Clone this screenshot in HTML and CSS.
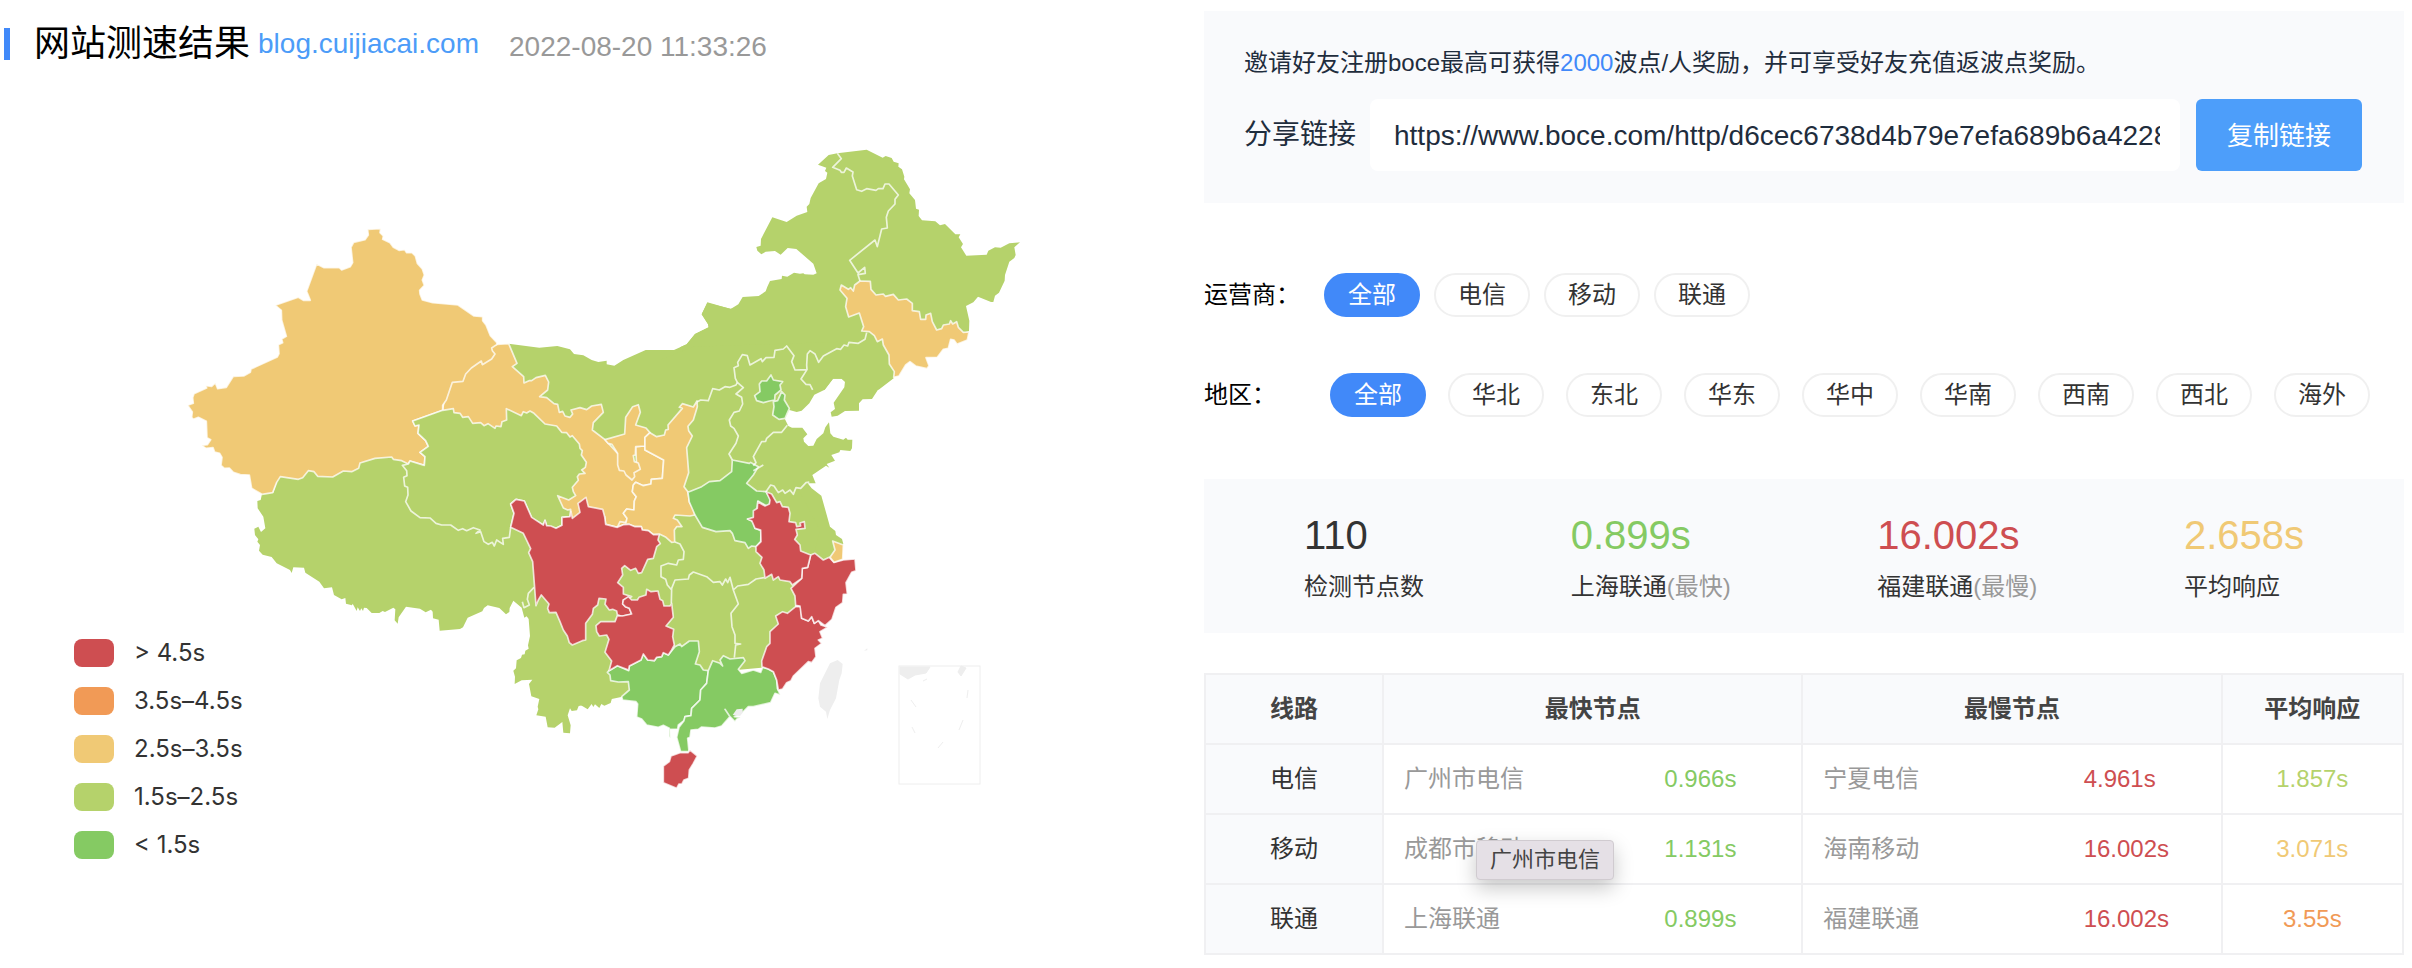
FILE: index.html
```html
<!DOCTYPE html>
<html lang="zh-CN">
<head>
<meta charset="utf-8">
<title>网站测速结果</title>
<link rel="stylesheet" href="styles.css">
</head>
<body>
<main class="page">
  <section class="result">
    <header class="result-head">
      <h1 class="title">网站测速结果</h1>
      <a class="site" href="#">blog.cuijiacai.com</a>
      <time class="date">2022-08-20 11:33:26</time>
    </header>
    <div class="map-area">
      <svg class="map" viewBox="0 88 1206 800" role="img" aria-label="全国响应时间分布">
        <!-- land base -->
        <g class="land c-lime">
          <path transform="translate(240 450) scale(.33333)" d="M66 132L62 150L52 153L53 175L70 200L76 235L63 246L55 230L43 236L45 255L55 268L52 275L60 285L57 302L68 314L95 321L110 340L150 360L155 369L160 352L192 353L196 368L238 395L252 415L276 412L282 435L305 448L316 444L318 461L336 466L338 461L350 483L353 472L360 483L364 475L369 483L372 473L380 474L395 489L418 489L428 483L435 486L460 473L466 478L464 511L473 521L476 502L498 470L540 476L557 487L573 479L578 485L579 505L596 509L599 542L660 537L669 532L683 503L727 484L732 474L743 466L778 474L798 493L808 486L809 474L820 452L845 473L853 503L860 499L866 507L870 558L864 586L866 596L856 602L854 613L846 614L843 624L830 631L828 655L820 662L825 680L824 702L845 691L877 689L867 702L874 739L898 747L893 770L895 778L889 796L917 800L923 832L944 833L967 816L970 848L990 850L992 826L983 796L990 775L995 783L1011 781L1018 763L1043 778L1055 762L1060 771L1065 763L1078 774L1084 762L1093 767L1112 759L1116 745L1140 730L1147 740L1300 600L1400 200L1100 -100L555 -20L300 -20L120 70L100 128Z"/>
          <path transform="translate(480 300) scale(.33333)" d="M86 131L178 143L232 138L270 148L282 162L310 166L335 180L355 186L380 182L380 193L403 197L430 180L497 150L582 150L620 133L645 102L686 82L684 72L665 43L682 9L752 26L1020 0L900 330L900 700L100 700Z"/>
          <path transform="translate(680 130) scale(.33333)" d="M0 652L20 643L45 612L86 592L84 583L65 553L82 517L152 537L175 523L188 501L236 498L257 484L262 470L270 453L305 447L306 437L322 440L342 428L360 431L370 430L374 433L400 434L410 430L400 401L349 357L323 354L302 374L285 363L257 365L244 373L232 362L229 351L242 347L243 327L277 262L320 276L350 257L382 246L380 230L388 222L392 204L416 160L438 147L442 128L435 123L439 113L414 104L446 75L472 70L560 59L608 83L617 78L635 84L641 95L656 100L655 110L666 118L673 140L672 148L690 178L688 190L705 210L708 236L717 239L716 258L726 271L766 274L780 286L795 282L826 313L841 313L836 322L849 342L843 352L859 377L920 374L925 362L945 352L962 353L988 340L1020 337L1003 352L1007 375L1003 384L988 395L975 435L974 452L957 488L945 497L940 516L933 516L894 500L880 517L858 528L868 572L867 604L700 640L641 745L596 779L495 770L495 755L485 746L459 746L434 779L0 780Z"/>
          <path transform="translate(660 340) scale(.33333)" d="M703 110L655 148L636 177L608 178L597 190L597 212L555 213L533 227L515 230L512 217L525 207L521 188L553 142L555 125L545 116L519 116L494 149L463 164L448 190L425 212L410 216L388 210L375 238L385 258L396 263L427 263L442 283L430 295L432 305L445 318L460 317L470 297L490 280L496 262L507 247L511 280L520 290L550 299L558 293L563 299L577 299L576 325L571 333L541 330L538 337L514 345L525 362L500 372L508 383L498 377L457 405L467 430L443 430L455 445L484 467L510 560L526 573L528 585L546 597L550 612L520 660L500 720L0 720L0 60L100 20L700 0Z"/>
          <path transform="translate(560 480) scale(.33333)" d="M0 0L700 0L780 150L760 230L640 560L200 600L187 650L0 690Z"/>
        </g>
        <!-- west -->
        <g class="province" transform="translate(480 300) scale(.33333)">
          <path class="c-yellow" d="M51 133L86 131L111 190L97 200L131 230L132 249L147 242L155 242L168 233L196 226L206 246L203 270L179 290L200 293L222 311L233 313L238 337L248 334L255 348L270 352L278 342L273 330L300 323L320 329L335 318L364 313L370 337L340 368L337 390L375 419L413 460L470 500L467 440L495 438L495 450L551 480L547 535L514 538L513 552L490 557L467 547L460 555L457 575L469 590L463 603L462 630L440 627L430 640L441 655L438 668L412 682L377 673L374 650L300 640L290 690L200 600L-100 500L-112 331L-100 240L-20 150Z"/>
        </g>
        <g class="province" transform="translate(180 210) scale(.33333)">
          <path class="c-yellow" d="M563 58L602 56L600 68L610 78L608 88L630 98L640 112L657 121L674 119L680 128L696 128L706 138L712 160L727 177L733 195L727 210L733 226L719 241L720 252L727 270L758 278L834 285L882 318L908 320L908 332L918 345L931 377L950 397L951 403L935 414L937 422L945 432L935 447L907 464L904 453L874 474L857 492L849 514L817 517L799 570L788 586L788 601L698 633L705 648L717 645L714 670L737 692L745 709L720 727L735 740L733 766L690 753L685 762L665 752L640 748L635 741L585 745L540 759L536 775L515 785L490 783L458 801L413 799L402 785L385 782L368 803L355 808L301 800L290 817L278 848L246 853L215 835L208 795L181 794L160 787L148 774L133 775L123 766L126 742L119 730L104 726L99 713L78 715L65 706L82 704L92 689L81 683L79 634L55 622L40 628L35 622L37 606L23 586L40 580L38 563L42 551L80 534L77 527L95 529L106 519L113 536L139 532L160 499L191 498L211 487L213 477L292 441L297 431L295 404L308 398L305 387L319 379L305 330L304 301L286 286L355 262L370 271L391 271L380 244L410 162L432 173L478 173L485 180L511 170L518 158L513 112L521 97L555 89L565 75Z"/>
          <path class="c-lime" d="M788 601L820 596L822 608L840 610L848 622L865 620L878 640L902 638L912 647L924 641L945 655L948 648L963 650L966 635L980 630L979 596L1024 617L1030 605L1040 609L1050 603L1062 610L1095 642L1130 648L1145 667L1160 668L1170 681L1177 677L1198 702L1200 715L1207 722L1204 735L1219 757L1216 772L1205 780L1215 790L1198 792L1192 800L1195 811L1177 832L1180 845L1187 857L1166 870L1133 857L1150 894L1163 900L1172 898L1170 920L1146 922L1146 946L1128 955L1100 948L1095 932L1090 945L1055 925L1033 873L1008 868L992 882L1002 910L992 952L988 982L968 985L970 1003L950 990L943 1008L937 997L925 1003L912 995L902 965L888 970L900 960L880 953L860 962L848 956L835 961L812 945L785 945L768 940L750 924L720 923L693 903L677 875L684 855L683 832L674 828L671 802L681 797L680 782L667 766L685 762L690 753L733 766L735 740L720 727L745 709L737 692L714 670L717 645L705 648L698 633Z"/>
        </g>
        <!-- centre and north -->
        <g class="province" transform="translate(480 300) scale(.33333)">
          <path class="c-yellow" d="M375 419L434 402L437 352L458 320L475 314L481 337L467 375L498 384L510 398L495 412L495 438L467 440L466 465L460 467L463 485L475 489L481 508L462 518L464 530L456 540L438 525L432 513L418 511L413 495L413 460L396 433L384 430Z"/>
          <path class="c-yellow" d="M510 398L530 410L553 405L557 390L565 388L564 375L607 325L598 322L607 311L640 321L651 303L652 320L640 360L624 379L626 392L637 408L620 443L626 518L612 560L624 576L628 606L643 630L644 645L630 648L585 645L580 655L592 660L606 680L590 680L583 690L584 726L575 727L558 712L540 703L520 704L505 692L487 690L484 680L465 680L447 673L430 674L412 682L420 665L438 668L441 655L430 640L440 627L462 630L463 603L469 590L457 575L460 555L467 547L490 557L513 552L514 538L547 535L551 480L495 450L495 412Z"/>
          <path class="c-red" d="M92 682L102 640L92 612L108 598L133 603L155 652L190 675L195 660L200 677L213 678L228 685L246 676L246 652L270 650L273 634L277 655L300 637L294 610L318 592L325 620L368 628L374 650L377 673L412 682L430 674L447 673L465 680L484 680L487 690L505 692L520 704L538 703L534 720L541 731L530 740L520 775L503 778L485 818L475 820L467 805L452 811L434 797L425 805L428 825L413 848L430 862L430 882L455 890L430 900L428 912L436 920L448 925L455 942L425 949L412 944L410 933L398 928L388 930L375 913L378 897L357 895L353 915L340 925L337 943L317 970L317 1020L307 1022L277 1035L268 1028L262 1008L250 990L240 965L228 937L208 938L203 925L207 912L184 885L175 900L168 917L158 785L146 758L152 746L130 700Z"/>
          <path class="c-green" d="M757 480L808 490L812 487L820 492L835 500L820 525L800 550L830 573L858 575L872 598L868 615L860 618L834 603L830 632L820 655L803 657L820 665L825 685L843 692L842 725L828 740L815 738L805 745L795 728L765 722L757 700L750 692L708 695L667 682L645 645L628 606L624 577L665 560L688 545L720 542L755 515Z"/>
          <path class="c-green" d="M873 225L880 240L908 245L900 255L903 270L885 285L884 300L868 303L850 308L830 302L824 287L840 275L838 252L845 243L860 243Z"/>
          <path class="c-green" d="M905 275L915 285L913 300L928 325L915 355L897 358L878 345L882 320L880 305L893 302Z"/>
        </g>
        <g class="province" transform="translate(680 130) scale(.33333)">
          <path class="c-yellow" d="M540 453L571 454L573 478L588 495L610 492L616 499L640 493L655 510L680 507L697 520L697 542L718 545L722 568L737 568L738 555L752 550L757 575L770 600L785 596L790 585L808 582L812 572L818 582L830 575L835 592L850 607L867 606L862 630L832 642L840 655L822 630L812 628L805 655L790 658L772 682L738 683L747 707L741 716L707 708L690 695L677 705L657 738L641 742L643 725L628 702L627 675L610 645L607 627L592 635L583 617L568 605L545 603L551 590L538 549L506 561L497 530L501 505L480 480L484 465L505 478L512 473L520 483L524 465Z"/>
        </g>
        <!-- south and east -->
        <g class="province" transform="translate(560 480) scale(.33333)">
          <path class="c-green" d="M147 572L172 557L206 572L208 558L243 540L250 522L263 540L283 542L290 532L305 530L310 518L325 525L345 500L360 492L365 500L388 483L415 483L418 515L406 552L420 555L430 570L445 572L440 610L422 630L420 660L395 685L393 707L375 710L372 722L355 735L353 747L330 748L331 775L327 768L328 745L310 736L295 742L260 735L245 717L230 711L233 672L228 665L188 660L185 650L208 630L205 605L175 606L152 602L150 585L142 577Z"/>
          <path class="c-green" d="M445 572L458 542L480 550L488 558L480 540L490 527L510 537L550 533L555 542L535 568L545 580L580 570L602 577L608 562L625 567L640 575L650 600L652 625L661 645L645 640L632 668L580 680L565 680L545 700L523 710L542 712L530 718L525 725L510 710L495 688L510 710L485 738L465 744L425 741L415 748L393 750L390 772L383 775L387 815L362 815L350 772L357 742L372 722L375 710L393 707L395 685L420 660L422 630L440 610Z"/>
          <path class="c-red" d="M232 360L237 352L258 345L260 328L273 335L294 333L300 358L308 362L312 378L330 378L335 370L340 412L318 438L341 448L338 470L343 495L335 510L325 525L310 518L305 530L290 532L283 542L263 540L250 522L243 540L208 558L206 570L172 557L147 572L155 543L135 517L147 478L140 465L118 468L110 455L108 437L122 425L165 425L172 407L187 408L215 402L208 385L196 380L188 372L190 360L205 350L215 360Z"/>
          <path class="c-red" d="M390 810L412 828L400 850L388 870L386 895L372 900L366 912L357 912L350 925L310 908L310 858L328 845L333 828L360 818L384 818Z"/>
          <path class="c-red" d="M606 560L605 543L620 500L630 490L630 455L655 432L647 408L668 395L682 400L707 380L722 380L725 415L745 423L755 410L763 430L775 422L783 435L803 442L780 455L788 475L775 480L785 490L765 505L768 530L755 548L745 545L700 588L693 602L680 608L668 627L655 630L650 600L640 575L625 567Z"/>
          <path class="c-red" d="M752 225L765 220L790 240L808 232L822 247L850 240L885 237L888 272L875 277L858 308L862 342L850 343L848 368L828 382L816 418L795 437L775 422L763 430L755 410L745 423L725 415L720 378L707 376L705 348L693 325L725 295L727 265L743 262Z"/>
          <path class="c-red" d="M618 35L635 42L650 68L660 65L667 80L685 82L690 100L687 125L707 128L710 140L722 138L720 129L733 125L735 145L708 148L712 165L704 178L720 195L722 213L752 225L743 262L727 265L725 295L697 315L690 305L660 300L655 290L640 300L635 283L615 295L612 270L600 250L606 232L588 215L588 200L603 185L602 150L585 145L575 122L562 117L580 112L580 92L592 85L593 65L615 78L628 72L630 60Z"/>
          <path class="c-yellow" d="M818 183L850 195L848 238L822 247L810 232L825 210Z"/>
          <path class="c-grey" d="M518 705L530 688L548 686L548 698L540 708ZM833 540L848 552L845 580L838 600L828 655L810 690L802 717L798 695L780 680L775 655L780 610L810 550ZM912 512L922 505L922 511Z"/>
        </g>
        <!-- borders between neighbours in the same band -->
        <g class="border">
          <path transform="translate(680 130) scale(.33333)" d="M472 70L484 86L458 112L480 121L484 127L492 127L499 114L519 126L517 138L530 179L545 184L560 176L588 181L595 176L609 176L615 162L627 162L655 195L645 208L645 222L625 243L619 262L622 294L605 297L592 350L585 330L509 391L534 429L554 412L556 430L534 434L540 453M560 608L555 628L535 640L507 637L503 648L492 645L482 658L470 656L430 678L416 697L405 672L390 662L382 672L380 705L381 719L363 747L378 763L390 764L398 780M381 719L345 720L335 695L342 677L320 648L310 657L285 661L282 682L258 683L247 695L243 686L210 705L202 677L187 674L173 697L175 707L162 713L166 745L172 757"/>
          <path transform="translate(480 300) scale(.33333)" d="M772 247L768 255L750 262L735 260L718 270L698 266L685 302L662 300L651 306M772 247L790 263L768 282L785 292L788 312L778 333L762 337L748 360L752 378L762 385L775 408L768 430L747 462L757 480M922 376L905 397L880 397L860 415L857 424L845 425L820 470L828 488L820 497M820 512L850 495M858 575L872 555L882 558L895 578L908 570L915 580L930 570L940 583L948 563L962 565L978 548L988 546"/>
          <path transform="translate(560 480) scale(.33333)" d="M345 186L360 192L372 215L370 238L355 240L350 255L325 250L303 258L303 290L317 298L322 315L335 330M334 370L335 325L345 300L385 297L388 285L400 276L440 290L460 307L480 305L487 315L497 297L503 308L510 292L520 330L533 318L565 313L588 297L612 293M520 330L535 372L513 400L516 440L525 465L525 490L542 492L527 495L523 533"/>
          <path transform="translate(240 450) scale(.33333)" d="M882 412L865 430L862 448L868 465L852 473L847 455"/>
        </g>
        <g class="inset">
          <rect x="899" y="666" width="81" height="118"/>
          <path d="M900 667H930L926 673L915 675L908 679L900 674Z"/>
          <path d="M961 666L966 668L961 676L958 672ZM911 700L916 707M912 727L915 733M938 748L943 742M959 730L963 720M967 698L968 690M923 681L927 679"/>
        </g>
      </svg>
      <ul class="legend">
        <li><i class="swatch b-red"></i>&gt; 4.5s</li>
        <li><i class="swatch b-orange"></i>3.5s–4.5s</li>
        <li><i class="swatch b-yellow"></i>2.5s–3.5s</li>
        <li><i class="swatch b-lime"></i>1.5s–2.5s</li>
        <li><i class="swatch b-green"></i>&lt; 1.5s</li>
      </ul>
    </div>
  </section>

  <section class="side">
    <div class="share">
      <p class="invite">邀请好友注册boce最高可获得<span class="points">2000</span>波点/人奖励，并可享受好友充值返波点奖励。</p>
      <div class="share-row">
        <label for="link">分享链接</label>
        <input id="link" class="link" type="text" readonly value="https://www.boce.com/http/d6cec6738d4b79e7efa689b6a4228">
        <button class="copy" type="button">复制链接</button>
      </div>
    </div>

    <div class="filter isp">
      <span class="filter-name">运营商：</span>
      <button class="pill active" type="button">全部</button>
      <button class="pill" type="button">电信</button>
      <button class="pill" type="button">移动</button>
      <button class="pill" type="button">联通</button>
    </div>
    <div class="filter area">
      <span class="filter-name">地区：</span>
      <button class="pill active" type="button">全部</button>
      <button class="pill" type="button">华北</button>
      <button class="pill" type="button">东北</button>
      <button class="pill" type="button">华东</button>
      <button class="pill" type="button">华中</button>
      <button class="pill" type="button">华南</button>
      <button class="pill" type="button">西南</button>
      <button class="pill" type="button">西北</button>
      <button class="pill" type="button">海外</button>
    </div>

    <div class="stats">
      <div><strong>110</strong><span>检测节点数</span></div>
      <div><strong class="t-green">0.899s</strong><span>上海联通<em>(最快)</em></span></div>
      <div><strong class="t-red">16.002s</strong><span>福建联通<em>(最慢)</em></span></div>
      <div><strong class="t-yellow">2.658s</strong><span>平均响应</span></div>
    </div>

    <table class="lines">
      <colgroup><col class="w-line"><col class="w-node"><col class="w-node"><col class="w-avg"></colgroup>
      <thead>
        <tr><th>线路</th><th>最快节点</th><th>最慢节点</th><th>平均响应</th></tr>
      </thead>
      <tbody>
        <tr>
          <th class="row-name">电信</th>
          <td><div class="node"><span>广州市电信</span><b class="t-green">0.966s</b></div></td>
          <td><div class="node"><span>宁夏电信</span><b class="t-red">4.961s</b></div></td>
          <td class="avg t-lime">1.857s</td>
        </tr>
        <tr>
          <th class="row-name">移动</th>
          <td><div class="node"><span>成都市移动</span><b class="t-green">1.131s</b><div class="tip" role="tooltip">广州市电信</div></div></td>
          <td><div class="node"><span>海南移动</span><b class="t-red">16.002s</b></div></td>
          <td class="avg t-yellow">3.071s</td>
        </tr>
        <tr>
          <th class="row-name">联通</th>
          <td><div class="node"><span>上海联通</span><b class="t-green">0.899s</b></div></td>
          <td><div class="node"><span>福建联通</span><b class="t-red">16.002s</b></div></td>
          <td class="avg t-orange">3.55s</td>
        </tr>
      </tbody>
    </table>
  </section>
</main>
</body>
</html>
```

FILE: styles.css
```css
:root {
  --red: #ce4e51;
  --orange: #f19a56;
  --yellow: #f0c975;
  --lime: #b5d26b;
  --green: #85ca63;
  --blue: #4189f9;
  --panel: #f9fafc;
  --line: #f0f0f2;
}

* {
  box-sizing: border-box;
}

body {
  margin: 0;
  background: #fff;
  color: #333;
  font: 24px/36px "Liberation Sans", "Noto Sans CJK SC", sans-serif;
}

button,
input {
  font: inherit;
}

.page {
  display: grid;
  grid-template-columns: minmax(0, 1fr) minmax(0, 1fr);
}

/* left column */
.result-head {
  display: flex;
  align-items: center;
  height: 88px;
  padding-left: 4px;
}

.title {
  margin: 0;
  padding-left: 24px;
  border-left: 6px solid var(--blue);
  color: #000;
  font-size: 36px;
  font-weight: 400;
  line-height: 32px;
}

.site {
  margin-left: 8px;
  color: #4c9cf8;
  font-size: 28px;
  text-decoration: none;
}

.date {
  margin-left: 30px;
  padding-top: 6px;
  color: #999;
  font-size: 28px;
}

.map-area {
  display: grid;
}

.map,
.legend {
  grid-area: 1 / 1;
}

.map {
  display: block;
  width: 100%;
}

.legend {
  display: flex;
  flex-direction: column;
  gap: 12px;
  align-self: end;
  margin: 0 0 25px;
  padding-left: 74px;
  list-style: none;
  font-family: Inter, sans-serif;
}

.legend li {
  display: flex;
  align-items: center;
  gap: 20px;
}

.swatch {
  width: 40px;
  height: 28px;
  border-radius: 8px;
}

.b-red { background: var(--red); }
.b-orange { background: var(--orange); }
.b-yellow { background: var(--yellow); }
.b-lime { background: var(--lime); }
.b-green { background: var(--green); }

.c-red { fill: var(--red); }
.c-yellow { fill: var(--yellow); }
.c-lime { fill: var(--lime); }
.c-green { fill: var(--green); }
.c-grey { fill: #eee; }

.province path,
.border path {
  stroke: #fff;
  stroke-opacity: .75;
  stroke-width: 5;
  stroke-linejoin: round;
}

.border path {
  fill: none;
}

.province .c-grey {
  stroke: none;
}

.inset {
  fill: #eee;
  stroke: #eee;
}

.inset rect {
  fill: none;
}

/* right column */
.side {
  padding: 11px 8px 11px 0;
  margin-left: -2px;
}

.share {
  height: 192px;
  padding: 34px 42px 32px 40px;
  background: var(--panel);
  color: #1f2d3d;
}

.invite {
  margin: 0 0 18px;
}

.points {
  color: var(--blue);
}

.share-row {
  display: flex;
  align-items: center;
  font-size: 28px;
}

.link {
  flex: 1;
  min-width: 0;
  height: 72px;
  margin: 0 16px 0 14px;
  padding: 2px 20px 0 24px;
  border: 0;
  border-radius: 8px;
  background: #fff;
  color: inherit;
}

.copy {
  width: 166px;
  height: 72px;
  padding: 2px 0 0;
  border: 0;
  border-radius: 6px;
  background: #4d9efa;
  color: #fff;
  font-size: 26px;
}

.filter {
  display: flex;
  align-items: center;
  color: #000;
}

.isp {
  gap: 14px;
  margin-top: 70px;
}

.area {
  gap: 22px;
  margin-top: 56px;
}

.isp .filter-name {
  width: 106px;
}

.area .filter-name {
  width: 104px;
}

.pill {
  width: 96px;
  height: 44px;
  padding: 0;
  border: 2px solid #f0f0f0;
  border-radius: 22px;
  background: #fff;
  color: #333;
}

.pill.active {
  border-color: var(--blue);
  background: var(--blue);
  color: #fff;
}

.stats {
  display: flex;
  justify-content: space-between;
  margin-top: 62px;
  padding: 32px 100px 28px;
  background: var(--panel);
}

.stats strong,
.stats span {
  display: block;
}

.stats strong {
  margin-bottom: 10px;
  font-size: 40px;
  font-weight: 400;
  line-height: 48px;
}

.stats em {
  color: #999;
  font-style: normal;
}

.lines {
  width: 100%;
  margin-top: 40px;
  border-collapse: collapse;
  table-layout: fixed;
}

.w-line { width: 178px; }
.w-node { width: 35%; }

.lines th,
.lines td {
  height: 70px;
  padding: 0 20px;
  border: 2px solid var(--line);
}

.lines th {
  padding: 0;
  background: var(--panel);
  color: #444;
}

.lines .row-name {
  color: #333;
  font-weight: 400;
}

.node {
  position: relative;
  display: grid;
  grid-template-columns: 69% 1fr;
  color: #999;
}

.node b {
  font-weight: 400;
}

.avg {
  text-align: center;
}

.tip {
  position: absolute;
  top: 9px;
  left: 72px;
  padding: 0 13px;
  border: 1px solid #d0cbd0;
  border-radius: 4px;
  background: #e5e0e6;
  box-shadow: 0 8px 20px rgba(0, 0, 0, .22);
  color: #444;
  font-size: 22px;
  line-height: 38px;
}

.t-red { color: var(--red); }
.t-orange { color: var(--orange); }
.t-yellow { color: var(--yellow); }
.t-lime { color: var(--lime); }
.t-green { color: var(--green); }
```
